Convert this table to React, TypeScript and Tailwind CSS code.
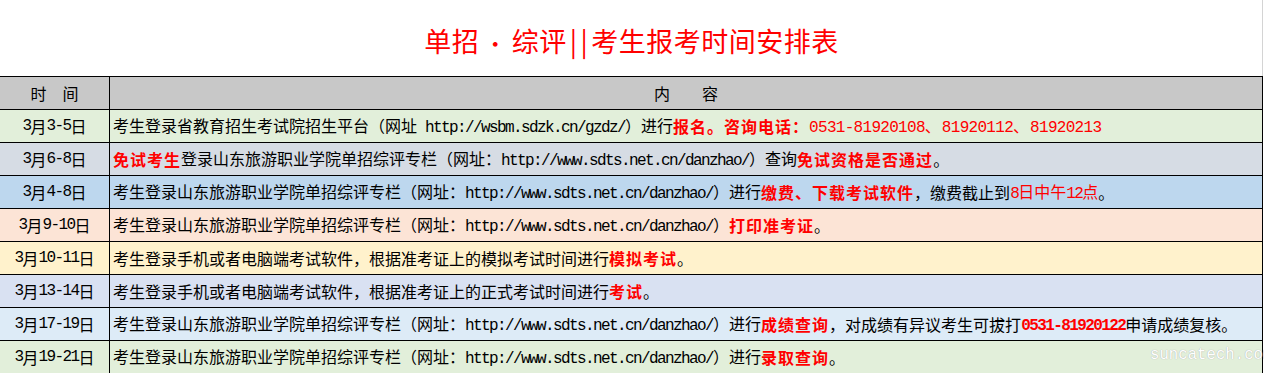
import React from "react";

type Seg = [string, number];

// 0 = plain, 1 = red bold, 2 = red regular, 3 = red regular, wider digits
const site = "考生登录山东旅游职业学院单招综评专栏（网址：http://www.sdts.net.cn/danzhao/）";

const rows: { date: string; bg: string; segs: Seg[] }[] = [
    {
        date: "3月3-5日",
        bg: "bg-[#e2efda]",
        segs: [
            ["考生登录省教育招生考试院招生平台（网址 http://wsbm.sdzk.cn/gzdz/）进行", 0],
            ["报名。咨询电话：", 1],
            ["0531-81920108、81920112、81920213", 3],
        ],
    },
    {
        date: "3月6-8日",
        bg: "bg-[#d6dce4]",
        segs: [
            ["免试考生", 1],
            ["登录山东旅游职业学院单招综评专栏（网址：http://www.sdts.net.cn/danzhao/）查询", 0],
            ["免试资格是否通过", 1],
            ["。", 0],
        ],
    },
    {
        date: "3月4-8日",
        bg: "bg-[#bdd7ee]",
        segs: [
            [site + "进行", 0],
            ["缴费、下载考试软件", 1],
            ["，缴费截止到", 0],
            ["8日中午12点", 2],
            ["。", 0],
        ],
    },
    {
        date: "3月9-10日",
        bg: "bg-[#fce4d6]",
        segs: [
            [site, 0],
            ["打印准考证", 1],
            ["。", 0],
        ],
    },
    {
        date: "3月10-11日",
        bg: "bg-[#fff2cc]",
        segs: [
            ["考生登录手机或者电脑端考试软件，根据准考证上的模拟考试时间进行", 0],
            ["模拟考试", 1],
            ["。", 0],
        ],
    },
    {
        date: "3月13-14日",
        bg: "bg-[#d9e1f2]",
        segs: [
            ["考生登录手机或者电脑端考试软件，根据准考证上的正式考试时间进行", 0],
            ["考试", 1],
            ["。", 0],
        ],
    },
    {
        date: "3月17-19日",
        bg: "bg-[#ddebf7]",
        segs: [
            [site + "进行", 0],
            ["成绩查询", 1],
            ["，对成绩有异议考生可拔打", 0],
            ["0531-81920122", 1],
            ["申请成绩复核。", 0],
        ],
    },
    {
        date: "3月19-21日",
        bg: "bg-[#e2efda]",
        segs: [
            [site + "进行", 0],
            ["录取查询", 1],
            ["。", 0],
        ],
    },
];

// ascii runs get a mono face squeezed to half a CJK cell, like SimSun
function Mixed({ text, wide = false }: { text: string; wide?: boolean }) {
    const parts = text.split(/([\x20-\x7e]+)/);
    const mono = wide
        ? "font-['Liberation_Mono'] tracking-[-0.7px] whitespace-pre"
        : "font-['Liberation_Mono'] tracking-[-1.6px] whitespace-pre";
    return (
        <>
            {parts.map((p, i) =>
                /^[\x20-\x7e]+$/.test(p) ? (
                    <span key={i} className={mono}>
                        {p}
                    </span>
                ) : (
                    <span key={i} className={wide ? "tracking-[1px]" : ""}>
                        {p}
                    </span>
                )
            )}
        </>
    );
}

const segClass = [
    "text-black",
    "text-[#ff0000] font-bold tracking-[1px]",
    "text-[#ff0000]",
    "text-[#ff0000]",
];

export default function App() {
    return (
        <div className="w-[1263px] bg-white font-['Noto_Sans_CJK_SC',sans-serif] text-[16px] text-black leading-none">
            <div className="h-[76px] flex items-center justify-center border-r border-[#d4d4d4]">
                <h1 className="text-[27px] font-normal text-[#ff0000] tracking-[0.5px] pt-[4px] pl-[1px]">
                    单招<span className="px-[5px] text-[22px]">•</span>综评<span className="px-[3px]">|</span>
                    <span className="pr-[3px]">|</span>考生报考时间安排表
                </h1>
            </div>

            <div className="relative border-r border-black">
                <div className="flex h-[33px] border-t border-black bg-[#c8c8c8]">
                    <div className="w-[109px] flex items-center justify-center">时　间</div>
                    <div className="flex-1 border-l border-black flex items-center justify-center">
                        内　　容
                    </div>
                </div>

                {rows.map((r) => (
                    <div key={r.date} className={`flex h-[33px] border-t border-black ${r.bg}`}>
                        <div className="w-[109px] flex items-center justify-center">
                            <Mixed text={r.date} />
                        </div>
                        <div className="flex-1 border-l border-black flex items-center pl-[3px] whitespace-nowrap overflow-hidden">
                            {r.segs.map(([t, s], i) => (
                                <span key={i} className={segClass[s]}>
                                    <Mixed text={t} wide={s === 3} />
                                </span>
                            ))}
                        </div>
                    </div>
                ))}

                <div className="absolute left-[1150px] bottom-[9px] font-['Liberation_Mono'] text-[15.7px] text-white whitespace-nowrap [text-shadow:0_0_1px_#9a9a9a] pointer-events-none">
                    suncatech.com
                </div>
            </div>
        </div>
    );
}
